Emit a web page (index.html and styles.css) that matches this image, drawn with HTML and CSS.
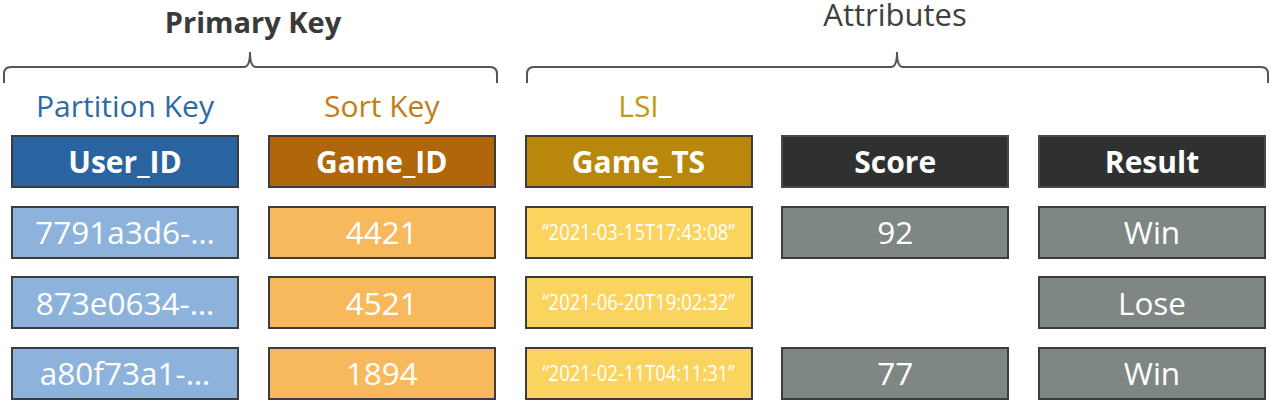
FILE: index.html
```html
<!DOCTYPE html>
<html lang="en">
<head>
<meta charset="utf-8">
<title>DynamoDB LSI</title>
<link rel="stylesheet" href="styles.css">
</head>
<body>
<div class="page">
  <div class="groups">
    <div class="group">
      <div class="title title-primary">Primary Key</div>
      <svg class="brace" viewBox="0 0 484 40" preserveAspectRatio="none">
        <path d="M -7 39 L -7 30 Q -7 23 0 23 L 233 23 Q 239 23 239 8 Q 239 23 245 23 L 479 23 Q 486 23 486 30 L 486 39" />
      </svg>
    </div>
    <div class="group">
      <div class="title title-attr">Attributes</div>
      <svg class="brace" viewBox="0 0 742 40" preserveAspectRatio="none">
        <path d="M 3 39 L 3 30 Q 3 23 10 23 L 367 23 Q 373 23 373 8 Q 373 23 379 23 L 737 23 Q 744 23 744 30 L 744 39" />
      </svg>
    </div>
  </div>

  <div class="labels">
    <div class="label label-pk">Partition Key</div>
    <div class="label label-sk">Sort Key</div>
    <div class="label label-lsi">LSI</div>
  </div>

  <div class="table">
    <div class="cell head head-pk">User_ID</div>
    <div class="cell head head-sk">Game_ID</div>
    <div class="cell head head-lsi">Game_TS</div>
    <div class="cell head head-attr">Score</div>
    <div class="cell head head-attr">Result</div>

    <div class="cell val val-pk">7791a3d6-…</div>
    <div class="cell val val-sk">4421</div>
    <div class="cell val val-lsi"><span class="ts">“2021-03-15T17:43:08”</span></div>
    <div class="cell val val-attr">92</div>
    <div class="cell val val-attr">Win</div>

    <div class="cell val val-pk">873e0634-…</div>
    <div class="cell val val-sk">4521</div>
    <div class="cell val val-lsi"><span class="ts">“2021-06-20T19:02:32”</span></div>
    <div class="cell empty"></div>
    <div class="cell val val-attr">Lose</div>

    <div class="cell val val-pk">a80f73a1-…</div>
    <div class="cell val val-sk">1894</div>
    <div class="cell val val-lsi"><span class="ts">“2021-02-11T04:11:31”</span></div>
    <div class="cell val val-attr">77</div>
    <div class="cell val val-attr">Win</div>
  </div>
</div>
</body>
</html>
```

FILE: styles.css
```css
* { box-sizing: border-box; }

html, body {
  margin: 0;
  padding: 0;
  background: #ffffff;
}

body {
  font-family: "Open Sans", Lato, "Liberation Sans", sans-serif;
  width: 1271px;
  height: 405px;
  overflow: hidden;
}

.page {
  padding-left: 11px;
}

.groups {
  display: grid;
  grid-template-columns: 484px 742px;
  column-gap: 29px;
}

.group {
  display: flex;
  flex-direction: column;
  align-items: stretch;
}

.title {
  height: 44px;
  text-align: center;
  line-height: 28px;
  white-space: nowrap;
}

.title-primary {
  padding-top: 8px;
  font-size: 29px;
  font-weight: 700;
  color: #3a3a3a;
}

.title-attr {
  padding-top: 0;
  font-size: 31px;
  font-weight: 400;
  color: #404040;
}

.brace {
  display: block;
  width: 100%;
  height: 40px;
  overflow: visible;
}

.brace path {
  fill: none;
  stroke: #555555;
  stroke-width: 2;
  vector-effect: non-scaling-stroke;
}

.labels {
  display: grid;
  grid-template-columns: repeat(5, 228px);
  column-gap: 28.75px;
  height: 51px;
}

.label {
  font-size: 30px;
  line-height: 30px;
  padding-top: 7px;
  text-align: center;
  white-space: nowrap;
}

.label-pk { color: #2d6aa5; }
.label-sk { color: #c27d14; }
.label-lsi { color: #c29a12; }

.table {
  display: grid;
  grid-template-columns: repeat(5, 228px);
  grid-auto-rows: 53px;
  column-gap: 28.75px;
  row-gap: 17.5px;
}

.cell {
  display: flex;
  align-items: center;
  justify-content: center;
  border: 2px solid #3c3c3c;
  color: #ffffff;
  white-space: nowrap;
  line-height: 1;
}

.head {
  font-size: 30px;
  font-weight: 700;
}

.val {
  font-size: 31.5px;
  font-weight: 400;
}

.head-pk { background: #2a64a0; }
.head-sk { background: #b0660a; }
.head-lsi { background: #b8870b; }
.head-attr { background: #2e3130; border-color: #4a4a4a; }

.val-pk { background: #8db3dd; }
.val-sk { background: #f7b95c; }
.val-lsi { background: #fbd45f; }
.val-attr { background: #7f8785; }

.empty {
  border: none;
  background: transparent;
}

.ts {
  display: inline-block;
  font-size: 21px;
  transform: scaleX(0.88);
}
```
